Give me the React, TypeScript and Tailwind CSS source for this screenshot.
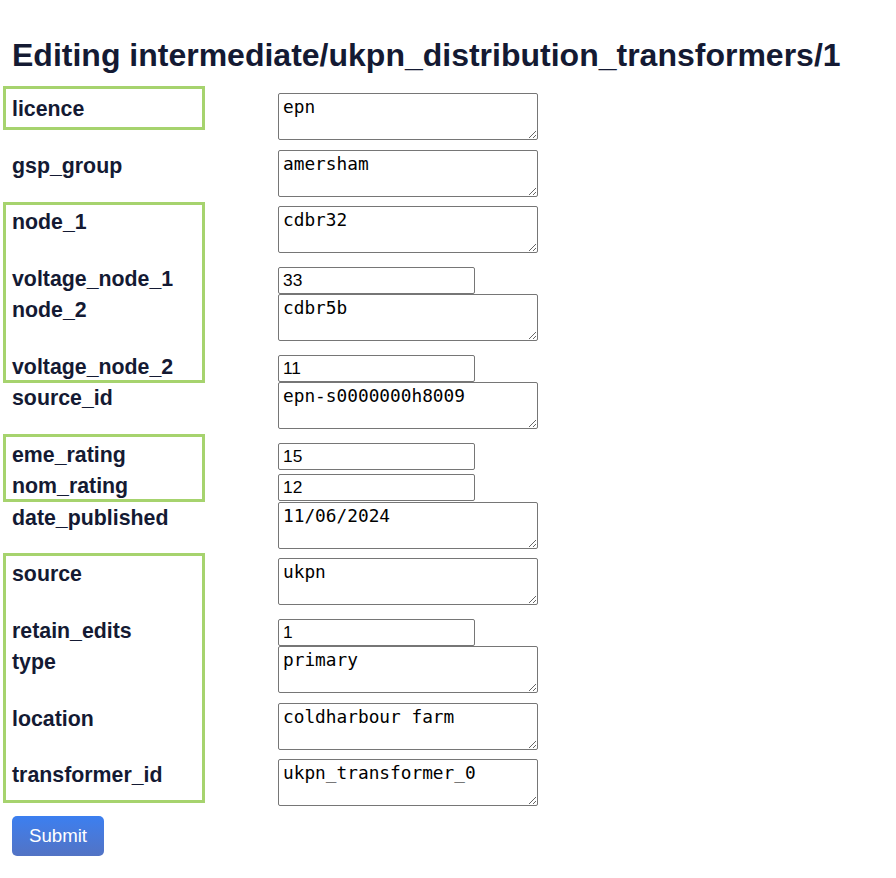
import { ReactNode } from 'react'

type Field = {
  name: string
  value: string
  kind: 'text' | 'line'
}

type Group = {
  fields: Field[]
  // frame drawn around the labels of a group: offsets in px relative to the group
  frame?: string
}

const groups: Group[] = [
  {
    fields: [{ name: 'licence', value: 'epn', kind: 'text' }],
    frame: '-top-[7px] h-[44px]',
  },
  { fields: [{ name: 'gsp_group', value: 'amersham', kind: 'text' }] },
  {
    fields: [
      { name: 'node_1', value: 'cdbr32', kind: 'text' },
      { name: 'voltage_node_1', value: '33', kind: 'line' },
      { name: 'node_2', value: 'cdbr5b', kind: 'text' },
      { name: 'voltage_node_2', value: '11', kind: 'line' },
    ],
    frame: '-top-[4px] h-[181px]',
  },
  { fields: [{ name: 'source_id', value: 'epn-s0000000h8009', kind: 'text' }] },
  {
    fields: [
      { name: 'eme_rating', value: '15', kind: 'line' },
      { name: 'nom_rating', value: '12', kind: 'line' },
    ],
    frame: '-top-[4.5px] h-[68px]',
  },
  { fields: [{ name: 'date_published', value: '11/06/2024', kind: 'text' }] },
  {
    fields: [
      { name: 'source', value: 'ukpn', kind: 'text' },
      { name: 'retain_edits', value: '1', kind: 'line' },
      { name: 'type', value: 'primary', kind: 'text' },
      { name: 'location', value: 'coldharbour farm', kind: 'text' },
      { name: 'transformer_id', value: 'ukpn_transformer_0', kind: 'text' },
    ],
    frame: '-top-[5px] h-[250px]',
  },
]

function Row({ field }: { field: Field }) {
  const isText = field.kind === 'text'
  return (
    <div className={`flex ${isText ? 'h-[56.5px]' : 'h-[31.5px]'}`}>
      <label
        htmlFor={field.name}
        className="w-[278px] shrink-0 pl-3 text-[21.33px] leading-[32px] font-bold"
      >
        {field.name}
      </label>
      {isText ? (
        <textarea
          id={field.name}
          defaultValue={field.value}
          className="block h-[47px] w-[260px] rounded-[2px] border border-[#767676] bg-white px-[4px] pt-[2px] pb-0 font-['DejaVu_Sans_Mono',monospace] text-[17.8px] leading-[22px] text-black"
        />
      ) : (
        <input
          id={field.name}
          type="text"
          defaultValue={field.value}
          className="mt-[4px] block h-[27px] w-[197px] rounded-[2px] border border-[#767676] bg-white px-[4px] font-['Liberation_Sans',Arial,sans-serif] text-[17.33px] text-black"
        />
      )}
    </div>
  )
}

function FieldGroup({ group }: { group: Group }): ReactNode {
  return (
    <div className="relative">
      {group.frame && (
        <div
          className={`pointer-events-none absolute left-[3px] w-[202px] border-[3px] border-[#a6d36e] ${group.frame}`}
        />
      )}
      {group.fields.map((f) => (
        <Row key={f.name} field={f} />
      ))}
    </div>
  )
}

export default function App() {
  return (
    <div className="min-h-screen bg-white font-['Liberation_Sans',Arial,sans-serif] text-[#141a33]">
      <h1 className="px-3 pt-[37px] pb-[19px] text-[32px] leading-[37px] font-bold whitespace-nowrap">
        Editing intermediate/ukpn_distribution_transformers/1
      </h1>

      <form onSubmit={(e) => e.preventDefault()}>
        {groups.map((g, i) => (
          <FieldGroup key={i} group={g} />
        ))}

        <div className="px-3">
          <button
            type="submit"
            className="h-[40px] w-[92px] rounded-[5px] bg-gradient-to-b from-[#3b7ff0] to-[#5273c4] text-[18.67px] text-white"
          >
            Submit
          </button>
        </div>
      </form>
    </div>
  )
}
